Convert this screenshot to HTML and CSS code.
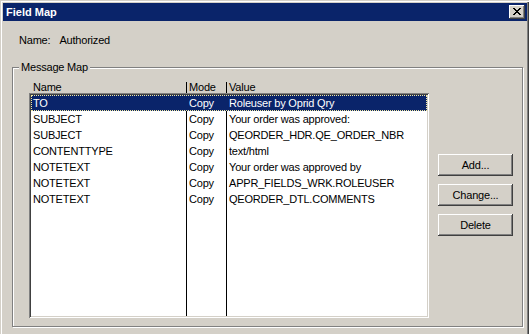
FILE: index.html
```html
<!DOCTYPE html>
<html lang='en'>
<head>
    <meta charset='UTF-8'>
    <title>Field Map</title>
    <link rel="stylesheet" href="styles.css">
</head>
<body>
    <div class="window">
        <div class="titlebar">
            <span class="title">Field Map</span>
            <button class="close-btn">
                <svg width="8" height="7" viewBox="0 0 8 7" shape-rendering="crispEdges"><path d="M0 0h2v1H0zM6 0h2v1H6zM1 1h2v1H1zM5 1h2v1H5zM2 2h4v1H2zM3 3h2v1H3zM2 4h4v1H2zM1 5h2v1H1zM5 5h2v1H5zM0 6h2v1H0zM6 6h2v1H6z"/></svg>
            </button>
        </div>
        <div class="name-row">
            <span>Name:</span>
            <span>Authorized</span>
        </div>
        <fieldset class="group">
            <legend>Message Map</legend>
            <div class="group-body">
                <div class="map">
                    <div class="map-head">
                        <span>Name</span>
                        <span>Mode</span>
                        <span>Value</span>
                    </div>
                    <div class="map-list">
                        <div class="row selected"><span>TO</span><span>Copy</span><span>Roleuser by Oprid Qry</span></div>
                        <div class="row"><span>SUBJECT</span><span>Copy</span><span>Your order was approved:</span></div>
                        <div class="row"><span>SUBJECT</span><span>Copy</span><span>QEORDER_HDR.QE_ORDER_NBR</span></div>
                        <div class="row"><span>CONTENTTYPE</span><span>Copy</span><span>text/html</span></div>
                        <div class="row"><span>NOTETEXT</span><span>Copy</span><span>Your order was approved by</span></div>
                        <div class="row"><span>NOTETEXT</span><span>Copy</span><span>APPR_FIELDS_WRK.ROLEUSER</span></div>
                        <div class="row"><span>NOTETEXT</span><span>Copy</span><span>QEORDER_DTL.COMMENTS</span></div>
                    </div>
                </div>
                <div class="actions">
                    <button class="btn">Add...</button>
                    <button class="btn">Change...</button>
                    <button class="btn">Delete</button>
                </div>
            </div>
        </fieldset>
    </div>
</body>
</html>
```

FILE: styles.css
```css
body {
    margin: 0;
    padding: 0;
    background-color: #d4d0c8;
    font-family: 'Liberation Sans', Arial, sans-serif;
    font-size: 11px;
    letter-spacing: -0.2px;
    color: #000;
    height: 334px;
    overflow: hidden;
}

.window {
    width: 529px;
    height: 345px;
    box-sizing: border-box;
    padding: 3px 2px 3px 3px;
    box-shadow: inset 1px 1px 0 #d4d0c8, inset 2px 2px 0 #fff, inset -1px -1px 0 #404040, inset -2px -2px 0 #808080;
}

.titlebar {
    height: 18px;
    background-color: #0a246a;
    display: flex;
    align-items: center;
    justify-content: space-between;
    padding: 0 2px 0 3px;
}

.title {
    color: #fff;
    font-weight: bold;
    letter-spacing: 0;
    line-height: 18px;
}

.close-btn {
    width: 16px;
    height: 14px;
    padding: 0;
    border: none;
    background-color: #d4d0c8;
    display: flex;
    align-items: center;
    justify-content: center;
    box-shadow: inset -1px -1px 0 #404040, inset 1px 1px 0 #fff, inset -2px -2px 0 #808080;
}

.close-btn svg {
    margin: 0 1px 1px 0;
}

.name-row {
    display: flex;
    gap: 9px;
    margin-top: 13px;
    padding-left: 16px;
    line-height: 13px;
}

.group {
    margin: 14px 4px 0 9px;
    padding: 6px 8px 8px 16px;
    border: 1px solid #808080;
    box-shadow: 1px 1px 0 #fff, inset 1px 1px 0 #fff;
}

.group legend {
    margin-left: -10px;
    padding: 0 2px;
    line-height: 13px;
    background-color: #d4d0c8;
}

.group-body {
    display: flex;
    gap: 9px;
}

.map {
    width: 400px;
}

.map-head {
    display: grid;
    grid-template-columns: 157px 40px 1fr;
    height: 13px;
}

.map-head span {
    margin-top: 2px;
    line-height: 11px;
    padding-left: 2px;
}

.map-head span:first-child {
    padding-left: 4px;
}

.map-head span + span {
    border-left: 1px solid #000;
}

.map-list {
    height: 225px;
    box-sizing: border-box;
    padding: 2px;
    background:
        linear-gradient(to right, transparent 157px, #000 157px, #000 158px, transparent 158px, transparent 197px, #000 197px, #000 198px, transparent 198px),
        #fff;
    box-shadow: inset 1px 1px 0 #808080, inset -1px -1px 0 #fff, inset 2px 2px 0 #404040, inset -2px -2px 0 #d4d0c8;
}

.row {
    display: grid;
    grid-template-columns: 155px 40px 1fr;
    height: 16px;
    line-height: 16px;
    white-space: nowrap;
}

.row span {
    padding-left: 3px;
}

.row span:first-child {
    padding-left: 2px;
}

.row.selected {
    background-color: #0a246a;
    color: #fff;
    outline: 1px dotted #f2e8a0;
    outline-offset: -1px;
}

.actions {
    display: flex;
    flex-direction: column;
    gap: 8px;
    margin-top: 74px;
}

.btn {
    width: 75px;
    height: 22px;
    padding: 0;
    border: none;
    font-family: inherit;
    font-size: 11px;
    letter-spacing: -0.2px;
    color: #000;
    background-color: #d4d0c8;
    box-shadow: inset -1px -1px 0 #404040, inset 1px 1px 0 #fff, inset -2px -2px 0 #808080;
}
```
